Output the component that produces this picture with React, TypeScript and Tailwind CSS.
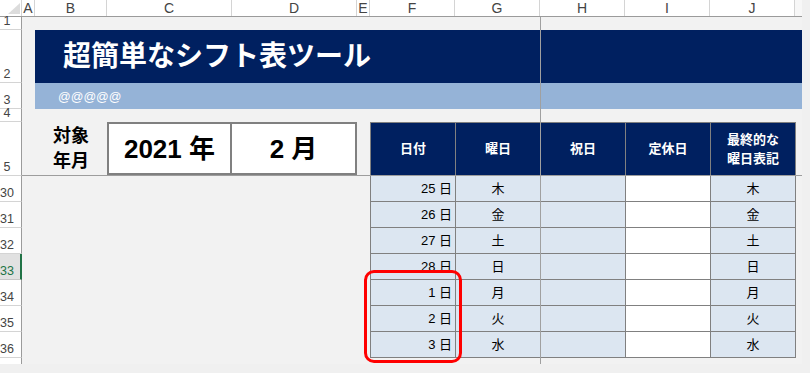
import type { ReactNode } from "react";

const jp = "font-['Liberation_Sans','Noto_Sans_CJK_JP',sans-serif]";
const hdrFont = "font-['Liberation_Sans',sans-serif]";

const columns = [
  { label: "A", w: "w-[13px]" },
  { label: "B", w: "w-[72px]" },
  { label: "C", w: "w-[125px]" },
  { label: "D", w: "w-[125px]" },
  { label: "E", w: "w-[13px]" },
  { label: "F", w: "w-[85px]" },
  { label: "G", w: "w-[85px]" },
  { label: "H", w: "w-[85px]" },
  { label: "I", w: "w-[85px]" },
  { label: "J", w: "w-[85px]" },
];

const days = [
  { row: "30", date: "25", wd: "木" },
  { row: "31", date: "26", wd: "金" },
  { row: "32", date: "27", wd: "土" },
  { row: "33", date: "28", wd: "日", selected: true },
  { row: "34", date: "1", wd: "月" },
  { row: "35", date: "2", wd: "火" },
  { row: "36", date: "3", wd: "水" },
];

function Row({
  label,
  height,
  selected,
  children,
}: {
  label?: string;
  height: string;
  selected?: boolean;
  children?: ReactNode;
}) {
  return (
    <div className={`flex ${height}`}>
      <div
        className={`flex w-[22px] shrink-0 items-end border-b pb-[3px] pr-[7px] text-[12.5px] leading-[9px] ${hdrFont} ${
          selected
            ? "border-b-[#c6c6c6] border-r-2 border-r-[#217346] bg-[#e1e1e1] text-[#217346]"
            : "border-b-[#d4d4d4] border-r border-r-[#9b9b9b] bg-white text-[#444]"
        }`}
      >
        <span className="w-full text-center">{label}</span>
      </div>
      <div className="flex flex-1">{children}</div>
    </div>
  );
}

function ColumnHeader() {
  return (
    <div className={`flex h-[17px] border-b border-[#9b9b9b] bg-white ${hdrFont}`}>
      <div className="flex w-[22px] shrink-0 items-end justify-end border-r border-[#d4d4d4] pb-[2px] pr-[1px]">
        <svg width="12" height="11" viewBox="0 0 12 11">
          <polygon points="12,0 12,11 0,11" fill="#dcdcdc" />
        </svg>
      </div>
      {columns.map((c) => (
        <div
          key={c.label}
          className={`${c.w} shrink-0 border-r border-[#d4d4d4] text-center text-[14px] leading-[17px] text-[#444]`}
        >
          {c.label}
        </div>
      ))}
      <div className="flex-1 bg-[#f7f7f7]" />
    </div>
  );
}

export default function App() {
  return (
    <div className="relative h-[373px] w-[810px] overflow-hidden bg-[#f0f0f0]">
      <div className="flex h-[364px] w-[802px] flex-col bg-[#f2f2f2]">
        <ColumnHeader />

        <Row label="1" height="h-[13px]" />

        <Row label="2" height="h-[53px]">
          <div className="w-[13px]" />
          <div
            className={`flex flex-1 items-center bg-[#002060] pl-[28px] text-[28px] font-bold text-white ${jp}`}
          >
            超簡単なシフト表ツール
          </div>
        </Row>

        <Row label="3" height="h-[26px]">
          <div className="w-[13px]" />
          <div
            className={`flex flex-1 items-center bg-[#95b3d7] pl-[23px] pt-[2px] text-[12.5px] text-white ${hdrFont}`}
          >
            @@@@@
          </div>
        </Row>

        <Row label="4" height="h-[13px]" />

        <Row label="5" height="h-[54px]">
          <div className="flex flex-1 border-b border-[#9d9d9d]">
            <div className="w-[13px]" />
            <div
              className={`flex w-[72px] flex-col items-center justify-center text-[18px] font-bold leading-[25px] text-black ${jp}`}
            >
              <span>対象</span>
              <span>年月</span>
            </div>
            <div className="flex w-[250px] border-2 border-[#808080] bg-white">
              <div
                className={`flex w-[123px] items-center justify-center border-r-2 border-[#808080] pt-[1px] text-[26px] font-bold text-black ${jp}`}
              >
                2021 年
              </div>
              <div
                className={`flex flex-1 items-center justify-center pt-[1px] text-[26px] font-bold text-black ${jp}`}
              >
                2 月
              </div>
            </div>
            <div className="w-[13px]" />
            <div className={`flex border-t border-[#808080] bg-[#002060] text-[13px] font-bold text-white ${jp}`}>
              <div className="flex w-[86px] items-center justify-center border-x border-[#808080]">日付</div>
              <div className="flex w-[85px] items-center justify-center border-r border-[#808080]">曜日</div>
              <div className="flex w-[85px] items-center justify-center border-r border-[#808080]">祝日</div>
              <div className="flex w-[85px] items-center justify-center border-r border-[#808080]">定休日</div>
              <div className="flex w-[85px] flex-col items-center justify-center border-r border-[#808080] leading-[19px]">
                <span>最終的な</span>
                <span>曜日表記</span>
              </div>
            </div>
          </div>
        </Row>

        {days.map((d) => (
          <Row key={d.row} label={d.row} height="h-[26px]" selected={d.selected}>
            <div className="w-[348px]" />
            <div className={`flex text-[13px] text-black ${jp}`}>
              <div className="flex w-[86px] items-center justify-end border-x border-b border-[#808080] bg-[#dce6f1] pr-[3px]">
                {d.date} 日
              </div>
              <div className="flex w-[85px] items-center justify-center border-r border-b border-[#808080] bg-[#dce6f1]">
                {d.wd}
              </div>
              <div className="w-[85px] border-r border-b border-[#808080] bg-[#dce6f1]" />
              <div className="w-[85px] border-r border-b border-[#808080] bg-white" />
              <div className="flex w-[85px] items-center justify-center border-r border-b border-[#808080] bg-[#dce6f1]">
                {d.wd}
              </div>
            </div>
          </Row>
        ))}

        <div className="flex flex-1">
          <div className="w-[22px] border-r border-[#9b9b9b] bg-white" />
        </div>
      </div>

      {/* freeze pane divider */}
      <div className="absolute left-[540px] top-[17px] h-[347px] w-px bg-[#a0a0a0]" />

      {/* red highlight */}
      <div className="absolute left-[364px] top-[270px] h-[93px] w-[98px] rounded-[10px] border-[3px] border-[#ff0000]" />
    </div>
  );
}
